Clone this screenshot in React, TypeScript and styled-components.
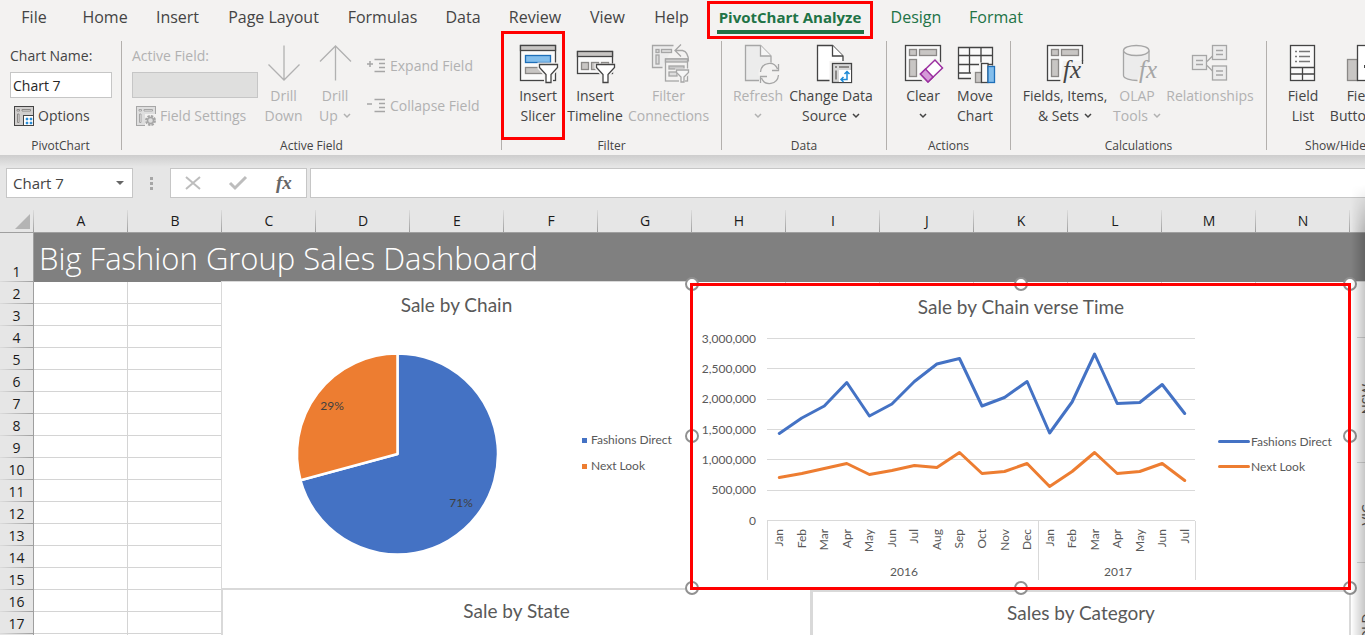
import React from "react";
import styled, { createGlobalStyle, css } from "styled-components";

const ui = `"Open Sans", "Noto Sans", sans-serif`;
const chartFont = `Lato, "Open Sans", sans-serif`;
const RED = "#ff0000";
const INK = "#444444";
const MUTED = "#b1b1b1";
const BLUE = "#4472c4";
const ORANGE = "#ed7d31";
const LINE = "#d9d9d9";

const GlobalStyle = createGlobalStyle`
  * { box-sizing: border-box; }
  body { margin: 0; overflow: hidden; font-family: ${ui}; color: ${INK}; }
  button, input { font: inherit; color: inherit; }
`;

const Window = styled.div`
  display: flex;
  flex-direction: column;
  height: 100vh;
  background: #e6e6e6;
`;

/* ---------- Ribbon ---------- */

const Ribbon = styled.header`
  flex: none;
  background: #f3f2f1;
`;

const TabBar = styled.nav`
  display: flex;
  height: 38px;
`;

const Tab = styled.button<{ $w: number; $tone?: "accent" | "active" }>`
  position: relative;
  flex: none;
  width: ${(p) => p.$w}px;
  padding: 0 0 4px;
  border: 0;
  background: none;
  font-size: 16px;
  line-height: 30px;
  white-space: nowrap;
  color: ${(p) => (p.$tone ? "#217346" : INK)};
  ${(p) =>
    p.$tone === "active" &&
    css`
      font-size: 15px;
      font-weight: 700;
      &::after {
        content: "";
        position: absolute;
        left: 14px;
        right: 13px;
        top: 30px;
        height: 4px;
        background: #217346;
      }
    `}
`;

const Callout = styled.span<{ $x: number; $y: number; $w: number; $h: number }>`
  position: absolute;
  left: ${(p) => p.$x}px;
  top: ${(p) => p.$y}px;
  width: ${(p) => p.$w}px;
  height: ${(p) => p.$h}px;
  border: 3px solid ${RED};
  pointer-events: none;
  z-index: 5;
`;

const Groups = styled.div`
  display: flex;
  height: 117px;
  padding-top: 3px;
`;

const Group = styled.section<{ $w: number }>`
  position: relative;
  flex: none;
  display: flex;
  flex-direction: column;
  justify-content: space-between;
  width: ${(p) => p.$w}px;
  height: 109px;
  border-right: 1px solid #b3b0ad;
`;

const GroupBody = styled.div`
  display: flex;
  padding-left: 10px;
`;

const GroupLabel = styled.div`
  height: 14px;
  margin-bottom: -3px;
  text-align: center;
  font-size: 12px;
  line-height: 14px;
`;

const BigButton = styled.button<{ $w: number }>`
  flex: none;
  width: ${(p) => p.$w}px;
  display: flex;
  flex-direction: column;
  align-items: center;
  padding: 3px 0 0;
  border: 0;
  background: none;
  font-size: 14px;
  line-height: 20px;
  white-space: nowrap;
  &:disabled { color: ${MUTED}; }
  > svg { margin-bottom: 2px; overflow: visible; }
`;

const TextLine = styled.span`
  display: flex;
  align-items: center;
  gap: 5px;
  height: 20px;
`;

const FieldStack = styled.div<{ $w: number }>`
  flex: none;
  display: flex;
  flex-direction: column;
  width: ${(p) => p.$w}px;
  padding-top: 4px;
  font-size: 14px;
`;

const FieldLabel = styled.label<{ $muted?: boolean }>`
  line-height: 22px;
  color: ${(p) => (p.$muted ? MUTED : INK)};
`;

const FieldInput = styled.input`
  width: 100%;
  height: 26px;
  margin-top: 5px;
  padding: 0 2px;
  border: 1px solid #c6c6c6;
  background: #fff;
  color: #262626;
  &:disabled { background: #dfdfde; }
`;

const SmallButton = styled.button`
  display: flex;
  align-items: center;
  gap: 4px;
  height: 20px;
  padding: 0 0 0 4px;
  border: 0;
  background: none;
  font-size: 14px;
  line-height: 20px;
  white-space: nowrap;
  &:disabled { color: ${MUTED}; }
  > svg { flex: none; }
`;

const OutlineStack = styled.div`
  display: flex;
  flex-direction: column;
  gap: 20px;
  padding: 15px 0 0 2px;
`;

const SettingsSlot = styled.div`
  margin-top: 8px;
`;

/* ---------- Formula bar ---------- */

const FormulaBar = styled.div`
  flex: none;
  display: flex;
  height: 55px;
  padding: 13px 0 12px 6px;
  background: linear-gradient(#cdcdcd, #e6e6e6 12px);
`;

const NameBox = styled.div`
  display: flex;
  flex: none;
  width: 127px;
  border: 1px solid #c6c6c6;
  background: #fff;
`;

const NameInput = styled.input`
  flex: 1;
  min-width: 0;
  padding: 0 6px;
  border: 0;
  background: none;
  font-size: 15px;
`;

const IconButton = styled.button<{ $w: number }>`
  display: flex;
  align-items: center;
  justify-content: center;
  width: ${(p) => p.$w}px;
  padding: 0;
  border: 0;
  background: none;
  > svg { overflow: visible; }
`;

const Grip = styled.div`
  display: flex;
  flex-direction: column;
  align-items: center;
  justify-content: center;
  gap: 2px;
  width: 37px;
  i { width: 3px; height: 3px; background: #a6a6a6; }
`;

const EntryTools = styled.div`
  display: flex;
  flex: none;
  width: 137px;
  margin-right: 3px;
  border: 1px solid #c6c6c6;
  background: #fff;
`;

const FormulaInput = styled.input`
  flex: 1;
  min-width: 0;
  border: 1px solid #c6c6c6;
  border-right: 0;
  background: #fff;
`;

/* ---------- Worksheet ---------- */

const Sheet = styled.main`
  position: relative;
  flex: 1;
  min-height: 0;
  overflow: hidden;
  background: #fff;
`;

const Cells = styled.table`
  table-layout: fixed;
  width: 1538px;
  border-collapse: separate;
  border-spacing: 0;
  font-size: 14px;
  color: #1a1a1a;
  th, td { padding: 0; white-space: nowrap; font-weight: 400; }
  thead th {
    height: 23px;
    line-height: 22px;
    border-bottom: 1px solid #9f9f9f;
    background: linear-gradient(#dcdcdc, #9f9f9f) right / 1px 100% no-repeat #e6e6e6;
  }
  tbody th {
    height: 22px;
    line-height: 21px;
    border-right: 1px solid #9f9f9f;
    background: linear-gradient(90deg, #dcdcdc, #9f9f9f) bottom / 100% 1px no-repeat #e6e6e6;
  }
  tbody td {
    border-right: 1px solid #d4d4d4;
    border-bottom: 1px solid #d4d4d4;
  }
`;

const BannerRow = styled.tr`
  && th { height: 49px; vertical-align: bottom; }
  && td {
    border: 0;
    padding-left: 5px;
    background: #808080;
    color: #fff;
    font-size: 31px;
    font-weight: 300;
    line-height: 48px;
  }
`;

const Floating = styled.section<{ $x: number; $y: number; $w: number; $h: number; $edge?: number }>`
  position: absolute;
  left: ${(p) => p.$x}px;
  top: ${(p) => p.$y}px;
  width: ${(p) => p.$w}px;
  height: ${(p) => p.$h}px;
  border: ${(p) => p.$edge ?? 1}px solid ${LINE};
  background: #fff;
  font-family: ${chartFont};
  color: #595959;
`;

const ChartTitle = styled.h2<{ $tight?: boolean }>`
  margin: ${(p) => (p.$tight ? 9 : 11)}px 0 1px;
  text-align: center;
  font-size: 19px;
  font-weight: 400;
  line-height: 24px;
`;

const ChartBody = styled.div`
  display: flex;
  svg { flex: none; display: block; font-family: ${chartFont}; font-size: 12px; fill: #595959; }
`;

const Legend = styled.ul<{ $row: number }>`
  margin: 0;
  padding: 109px 0 0;
  list-style: none;
  font-size: 12px;
  line-height: ${(p) => p.$row}px;
  white-space: nowrap;
  li { display: flex; align-items: center; }
`;

const Swatch = styled.i<{ $c: string; $line?: boolean }>`
  flex: none;
  width: ${(p) => (p.$line ? 32 : 5)}px;
  height: ${(p) => (p.$line ? 3 : 5)}px;
  margin-right: ${(p) => (p.$line ? 1 : 4)}px;
  border-radius: ${(p) => (p.$line ? 2 : 0)}px;
  background: ${(p) => p.$c};
`;

const Handle = styled.i<{ $x: number; $y: number }>`
  position: absolute;
  left: ${(p) => p.$x}px;
  top: ${(p) => p.$y}px;
  width: 14px;
  height: 14px;
  margin: -7px 0 0 -7px;
  border: 2px solid #919191;
  border-radius: 50%;
  background: #fff;
`;

const EdgeShadow = styled.div`
  position: fixed;
  right: 0;
  top: 185px;
  bottom: 0;
  width: 14px;
  background: linear-gradient(90deg, transparent, rgba(0, 0, 0, 0.22));
  mask-image: linear-gradient(transparent, #000 50px);
  pointer-events: none;
`;

/* ---------- Icons ---------- */

const Chevron = () => (
  <svg width="8" height="6" viewBox="0 0 8 6" fill="none" stroke="currentColor" strokeWidth="1.5" aria-hidden>
    <path d="M1 1l3 3 3-3" />
  </svg>
);

const Big = ({ children, tone = INK }: { children: React.ReactNode; tone?: string }) => (
  <svg width="40" height="40" viewBox="0 0 40 40" fill="none" stroke={tone} strokeWidth="1.3" aria-hidden>
    {children}
  </svg>
);

const Fx = ({ x, y, size, color }: { x: number; y: number; size: number; color: string }) => (
  <text x={x} y={y} fill={color} stroke="none" fontFamily="Liberation Serif, serif" fontStyle="italic" fontSize={size}>
    fx
  </text>
);

const Funnel = () => <path d="M21.5 20.5h18v3l-6.500 7v8h-5v-8l-6.500-7z" fill="#fff" />;

const SlicerIcon = () => (
  <Big>
    <rect x="2.500" y="1.500" width="35" height="35" fill="#fafafa" />
    <rect x="2.500" y="1.500" width="35" height="5" fill="#c8c6c4" />
    <rect x="7.500" y="11.500" width="25" height="7" fill="#83beec" stroke="#1e6fb8" />
    <rect x="7.500" y="23.500" width="17" height="6" fill="#c8c6c4" stroke="#8a8886" />
    <path d="M19.500 18.500h22v6l-6.500 7v9h-9v-9l-6.500-7z" fill="#f3f2f1" stroke="none" />
    <Funnel />
  </Big>
);

const TimelineIcon = () => (
  <Big>
    <rect x="2.500" y="7.500" width="35" height="22" fill="#fafafa" />
    <rect x="2.500" y="7.500" width="35" height="5" fill="#c8c6c4" />
    <g fill="#c8c6c4" stroke="#8a8886">
      <rect x="6.500" y="18.500" width="7" height="7" />
      <rect x="16.500" y="18.500" width="7" height="7" />
      <rect x="26.500" y="18.500" width="7" height="7" />
    </g>
    <path d="M19.500 19.500h22v5l-6.500 7v9h-9v-9l-6.500-7z" fill="#f3f2f1" stroke="none" />
    <Funnel />
  </Big>
);

const ConnectionsIcon = () => (
  <Big tone="#a6a6a6">
    <path d="M24.500 1.500h-21v22h10" fill="#ececec" />
    <rect x="7" y="5.500" width="3" height="3" fill="#ddd" />
    <rect x="12.500" y="5.500" width="10" height="3" fill="#ddd" />
    <rect x="7" y="11" width="3" height="9" fill="#ddd" />
    <path d="M32 .5l-6 6 6 6M26.500 6.500h7c4.500 1 6 5 6 11" />
    <rect x="16.500" y="15" width="22" height="22" fill="#f3f2f1" />
    <rect x="16.500" y="15" width="22" height="3" fill="#d0d0d0" />
    <rect x="20" y="22" width="15" height="3" fill="#c8c8c8" />
    <rect x="20" y="28" width="8" height="4" fill="#ddd" />
    <path d="M26 24.500h15v5l-5 5v5h-6v-6z" fill="#f3f2f1" stroke="none" />
    <path d="M27.500 26h12v2.500l-4.500 4.500v5h-3v-5l-4.500-4.500z" fill="#f6f6f6" />
  </Big>
);

const RefreshIcon = () => (
  <Big tone="#a6a6a6">
    <path d="M21 36.500H7.500v-35h15l10.500 10.500v7" fill="#ececec" />
    <path d="M22.500 1.500V12H33" fill="#f6f6f6" />
    <circle cx="31.500" cy="29.500" r="11" fill="#f3f2f1" stroke="none" />
    <path d="M22.500 28c1-10 13.500-11.500 17-3M40.500 20v6.500H34M40.500 31c-1 10-13.500 11.500-17 3M22.500 39v-6.500H29" />
  </Big>
);

const ChangeSourceIcon = () => (
  <Big>
    <path d="M21 36.500H6.500v-35h15l10.500 10.500v7" fill="#fff" />
    <path d="M21.500 1.500V12H32" fill="#fff" />
    <rect x="18.500" y="17" width="24" height="23" fill="#f3f2f1" stroke="none" />
    <rect x="21.500" y="19.500" width="19" height="19" fill="#d8d8d8" />
    <path d="M28 26h12v12H28z" fill="#fff" stroke="none" />
    <path d="M24 23h2M28 23h10M25 26.500v9" stroke="#8a8886" strokeWidth="2" />
    <path d="M30 35.500h6v-8M33.500 30l2.500-2.500 2.500 2.500M32.500 33l-2.500 2.500 2.500 2.500" stroke="#1e8ad6" strokeWidth="1.500" />
  </Big>
);

const PivotFrame = () => (
  <>
    <rect x="2.500" y="1.500" width="35" height="35" fill="#fafafa" />
    <g fill="#c8c6c4" stroke="#8a8886">
      <rect x="6.500" y="5.500" width="7" height="6" />
      <rect x="16.500" y="5.500" width="17" height="6" />
      <rect x="6.500" y="15.500" width="7" height="17" />
    </g>
  </>
);

const ClearIcon = () => (
  <Big>
    <PivotFrame />
    <path d="M15 31L32 13l10 9v16H20z" fill="#f3f2f1" stroke="none" />
    <path d="M17.500 30L32 16l7.500 8L25 38z" fill="#fff" stroke="#9b2fa0" strokeWidth="1.500" />
    <path d="M17.500 30l5-5 7.500 8-5 5z" fill="#d59ad8" stroke="#9b2fa0" strokeWidth="1.500" />
  </Big>
);

const MoveChartIcon = () => (
  <Big>
    <path d="M3.500 3.500h34v26h-17l-4 5h-13z" fill="#fafafa" />
    <path d="M3.500 11.500h34M3.500 20.500h34M3.500 29h15M14.500 3.500v26M26 3.500v26" />
    <path d="M16 27.500h8v-9h8v3h9v19H16z" fill="#f3f2f1" stroke="none" />
    <rect x="20.500" y="28.500" width="6" height="10" fill="#c8c6c4" stroke="#8a8886" />
    <rect x="26.500" y="19.500" width="6.500" height="19" fill="#fafafa" />
    <rect x="33" y="22.500" width="6.500" height="16" fill="#83beec" stroke="#1e6fb8" />
  </Big>
);

const FieldsIcon = () => (
  <Big>
    <PivotFrame />
    <path d="M18 17h22v22H15z" fill="#f3f2f1" stroke="none" />
    <path d="M37.500 16v4" />
    <Fx x={18} y={34} size={25} color={INK} />
  </Big>
);

const OlapIcon = () => (
  <Big tone="#a6a6a6">
    <path d="M7 7v25c3 3 8 4 13 4l11-18V7z" fill="#ececec" stroke="none" />
    <path d="M6.500 6.500v25c0 3 7 5 14 5M32 6.500V18" />
    <ellipse cx="19.250" cy="6.500" rx="12.750" ry="5" fill="#f3f2f1" />
    <Fx x={22} y={34} size={25} color="#a6a6a6" />
  </Big>
);

const RelationshipsIcon = () => (
  <Big tone="#a6a6a6">
    <path d="M17 17.500l6-6M17 21.500l6 6" />
    <g fill="#ececec">
      <rect x="2.500" y="11.500" width="14" height="14" />
      <rect x="22.500" y="1.500" width="14" height="14" />
      <rect x="22.500" y="22" width="14" height="14" />
    </g>
    <path d="M6 16.500h7M6 20.500h7M26 6.500h7M26 10.500h7M26 27h7M26 31h7" />
  </Big>
);

const FieldListIcon = () => (
  <Big>
    <rect x="7.500" y="1.500" width="24" height="35" fill="#fafafa" />
    <path d="M7.500 23.500h24M7.500 30h24M19.500 23.500v13" />
    <path d="M12 7.500h2M16 7.500h11M12 12.500h2M16 12.500h11M12 17.500h2M16 17.500h11" stroke="#777" />
  </Big>
);

const FieldButtonsIcon = () => (
  <Big>
    <rect x="5.500" y="15.500" width="10" height="21" fill="#c8c6c4" stroke="#8a8886" />
    <rect x="15.500" y="1.500" width="16" height="35" fill="#fff" />
    <path d="M22 22.500h6" strokeWidth="3" />
  </Big>
);

const DrillIcon = ({ up }: { up?: boolean }) => (
  <Big tone="#b1b1b1">
    {up ? <path d="M20.500 36.500V2M5 17.500L20.500 2 36 17.500" /> : <path d="M20 1.500V36M4.500 20.500L20 36l15.500-15.500" />}
  </Big>
);

const PaneIcon = ({ gear }: { gear?: boolean }) => {
  const c = gear ? "#a6a6a6" : INK;
  return (
    <svg width="20" height="20" viewBox="0 0 20 20" fill="none" stroke={c} aria-hidden>
      <rect x=".5" y=".5" width="19" height="19" fill={gear ? "#dedede" : "#d0cecd"} />
      <path d="M3 3.500h2.500v1.500H3zM8 3.500h8.500v1.500H8zM3.500 8h1.500v8.500H3.500z" fill="#f3f2f1" stroke={gear ? "#a6a6a6" : "#8a8886"} />
      {gear ? (
        <>
          <path d="M9 8h11.500v12.500H9z" fill="#f3f2f1" stroke="none" />
          <circle cx="14.500" cy="14.500" r="4.500" strokeWidth="2" strokeDasharray="2.400 1.100" />
          <circle cx="14.500" cy="14.500" r="3" fill="#dedede" strokeWidth="1.500" />
        </>
      ) : (
        <>
          <rect x="9.500" y="9.500" width="10" height="10" fill="#fff" />
          <path d="M12 12h2v2h-2zM16 12h2v2h-2zM12 16h2v2h-2zM16 16h2v2h-2z" fill="#2b8fd8" stroke="#2b8fd8" strokeWidth=".5" />
        </>
      )}
    </svg>
  );
};

const OutlineIcon = ({ plus }: { plus?: boolean }) => (
  <svg width="19" height="16" viewBox="0 0 19 16" fill="none" stroke="#a6a6a6" strokeWidth="1.500" aria-hidden>
    <path d={plus ? "M0 6h6M3 3v6" : "M0 6h5"} />
    <path d="M7.500 1.500H18M12 5.500h6M12 9.500h6M7.500 13.500H18" />
  </svg>
);

/* ---------- Charts ---------- */

const months = ["Jan", "Feb", "Mar", "Apr", "May", "Jun", "Jul", "Aug", "Sep", "Oct", "Nov", "Dec"];
const fashions = [1434, 1690, 1887, 2275, 1722, 1920, 2291, 2580, 2670, 1887, 2027, 2291, 1442, 1953, 2744, 1928, 1945, 2242, 1764];
const nextLook = [709, 775, 857, 940, 758, 824, 907, 874, 1121, 775, 808, 940, 560, 808, 1121, 775, 808, 940, 659];
const ticks = [3000, 2500, 2000, 1500, 1000, 500, 0];

const LEFT = 75;
const RIGHT = 503;
const STEP = (RIGHT - LEFT) / fashions.length;
const yOf = (v: number) => 200.5 - (v * 182) / 3000;
const xOf = (i: number) => LEFT + 1 + STEP * (i + 0.5);
const pointsOf = (d: number[]) => d.map((v, i) => `${xOf(i).toFixed(1)},${yOf(v).toFixed(1)}`).join(" ");

const LinePlot = () => (
  <svg width="526" height="264" role="img" aria-label="Monthly sales by chain">
    {ticks.map((t) => (
      <g key={t}>
        <path d={`M${LEFT} ${Math.floor(yOf(t)) + 0.5}H${RIGHT}`} stroke={LINE} />
        <text x="64" y={yOf(t) + 4} textAnchor="end">
          {t ? (t * 1000).toLocaleString("en-US") : "0"}
        </text>
      </g>
    ))}
    <path d={`M${LEFT + 0.5} 201v59M${Math.ceil(LEFT + STEP * 12) + 0.5} 201v59M${RIGHT + 0.5} 201v59`} stroke={LINE} />
    {fashions.map((_, i) => (
      <text key={i} transform={`translate(${(xOf(i) + 4).toFixed(0)} 209) rotate(-90)`} textAnchor="end">
        {months[i % 12]}
      </text>
    ))}
    <text x="212" y="256" textAnchor="middle">2016</text>
    <text x="426" y="256" textAnchor="middle">2017</text>
    <g fill="none" strokeWidth="3" strokeLinecap="round" strokeLinejoin="round">
      <polyline points={pointsOf(fashions)} stroke={BLUE} />
      <polyline points={pointsOf(nextLook)} stroke={ORANGE} />
    </g>
  </svg>
);

const PiePlot = () => (
  <svg width="360" height="250" role="img" aria-label="Share of sales by chain">
    <g stroke="#fff" strokeWidth="2.500" strokeLinejoin="round">
      <path d="M175.500 136V35.500A100.500 100.500 0 1 1 78.500 162.300z" fill={BLUE} />
      <path d="M175.500 136L78.500 162.300A100.500 100.500 0 0 1 175.500 35.500z" fill={ORANGE} />
    </g>
    <g fill="#404040" textAnchor="middle">
      <text x="110" y="92">29%</text>
      <text x="239" y="189">71%</text>
    </g>
  </svg>
);

const ChainLegend = ({ line }: { line?: boolean }) => (
  <Legend $row={line ? 25 : 26}>
    <li><Swatch $c={BLUE} $line={line} />Fashions Direct</li>
    <li><Swatch $c={ORANGE} $line={line} />Next Look</li>
  </Legend>
);

/* ---------- Page ---------- */

const Worksheet = () => (
  <Sheet>
    <Cells>
      <colgroup>
        <col style={{ width: 34 }} />
        {Array.from({ length: 16 }, (_, i) => <col key={i} />)}
      </colgroup>
      <thead>
        <tr>
          <th aria-label="Select all">
            <svg width="34" height="22" viewBox="0 0 34 22" display="block" aria-hidden>
              <path d="M30 4v15H15z" fill="#b4b4b4" />
            </svg>
          </th>
          {"ABCDEFGHIJKLMNOP".split("").map((c) => <th key={c} scope="col">{c}</th>)}
        </tr>
      </thead>
      <tbody>
        <BannerRow>
          <th scope="row">1</th>
          <td colSpan={16}>Big Fashion Group Sales Dashboard</td>
        </BannerRow>
        {Array.from({ length: 24 }, (_, r) => (
          <tr key={r}>
            <th scope="row">{r + 2}</th>
            {Array.from({ length: 16 }, (_, c) => <td key={c} />)}
          </tr>
        ))}
      </tbody>
    </Cells>

    <Floating $x={1350} $y={71} $w={190} $h={800}>
      <svg width="60" height="600" fontSize="13" fill="#595959" aria-hidden>
        <path d="M6 55.500h9M6 180.500h9M6 280.500h9" stroke={LINE} />
        <text transform="translate(21 117) rotate(-90)" textAnchor="middle">NSW</text>
        <text transform="translate(21 233) rotate(-90)" textAnchor="middle">VIC</text>
        <text transform="translate(21 345) rotate(-90)" textAnchor="middle">QLD</text>
      </svg>
    </Floating>
    <Floating $x={221} $y={378} $w={591} $h={320} $edge={2}>
      <ChartTitle $tight>Sale by State</ChartTitle>
    </Floating>
    <Floating $x={811} $y={380} $w={540} $h={320} $edge={2}>
      <ChartTitle $tight>Sales by Category</ChartTitle>
    </Floating>
    <Floating $x={221} $y={71} $w={471} $h={308}>
      <ChartTitle>Sale by Chain</ChartTitle>
      <ChartBody>
        <PiePlot />
        <ChainLegend />
      </ChartBody>
    </Floating>
    <Floating $x={691} $y={73} $w={660} $h={307}>
      <ChartTitle>Sale by Chain verse Time</ChartTitle>
      <ChartBody>
        <LinePlot />
        <ChainLegend line />
      </ChartBody>
      {[0, 329, 658].flatMap((x) =>
        [0, 152, 304].filter((y) => !(x === 329 && y === 152)).map((y) => <Handle key={`${x}-${y}`} $x={x} $y={y} />)
      )}
    </Floating>
    <Callout $x={690} $y={73} $w={661} $h={307} />
  </Sheet>
);

export default function App() {
  return (
    <Window>
      <GlobalStyle />
      <Ribbon>
        <TabBar>
          <Tab $w={68}>File</Tab>
          <Tab $w={74}>Home</Tab>
          <Tab $w={71}>Insert</Tab>
          <Tab $w={121}>Page Layout</Tab>
          <Tab $w={97}>Formulas</Tab>
          <Tab $w={64}>Data</Tab>
          <Tab $w={80}>Review</Tab>
          <Tab $w={65}>View</Tab>
          <Tab $w={63}>Help</Tab>
          <Tab $w={174} $tone="active">
            PivotChart Analyze
            <Callout $x={4} $y={1} $w={166} $h={38} />
          </Tab>
          <Tab $w={78} $tone="accent">Design</Tab>
          <Tab $w={82} $tone="accent">Format</Tab>
        </TabBar>
        <Groups>
          <Group $w={122}>
            <GroupBody>
              <FieldStack $w={102}>
                <FieldLabel htmlFor="chart-name">Chart Name:</FieldLabel>
                <FieldInput id="chart-name" defaultValue="Chart 7" />
                <SettingsSlot>
                  <SmallButton><PaneIcon />Options</SmallButton>
                </SettingsSlot>
              </FieldStack>
            </GroupBody>
            <GroupLabel>PivotChart</GroupLabel>
          </Group>
          <Group $w={380}>
            <GroupBody>
              <FieldStack $w={126}>
                <FieldLabel htmlFor="active-field" $muted>Active Field:</FieldLabel>
                <FieldInput id="active-field" disabled />
                <SettingsSlot>
                  <SmallButton disabled><PaneIcon gear />Field Settings</SmallButton>
                </SettingsSlot>
              </FieldStack>
              <BigButton $w={51} disabled><DrillIcon /><TextLine>Drill</TextLine><TextLine>Down</TextLine></BigButton>
              <BigButton $w={52} disabled><DrillIcon up /><TextLine>Drill</TextLine><TextLine>Up <Chevron /></TextLine></BigButton>
              <OutlineStack>
                <SmallButton disabled><OutlineIcon plus />Expand Field</SmallButton>
                <SmallButton disabled><OutlineIcon />Collapse Field</SmallButton>
              </OutlineStack>
            </GroupBody>
            <GroupLabel>Active Field</GroupLabel>
          </Group>
          <Group $w={220}>
            <GroupBody>
              <BigButton $w={52}><SlicerIcon /><TextLine>Insert</TextLine><TextLine>Slicer</TextLine></BigButton>
              <BigButton $w={62}><TimelineIcon /><TextLine>Insert</TextLine><TextLine>Timeline</TextLine></BigButton>
              <BigButton $w={85} disabled><ConnectionsIcon /><TextLine>Filter</TextLine><TextLine>Connections</TextLine></BigButton>
            </GroupBody>
            <GroupLabel>Filter</GroupLabel>
            <Callout $x={-1} $y={-10} $w={64} $h={109} />
          </Group>
          <Group $w={165}>
            <GroupBody>
              <BigButton $w={52} disabled><RefreshIcon /><TextLine>Refresh</TextLine><TextLine><Chevron /></TextLine></BigButton>
              <BigButton $w={94}><ChangeSourceIcon /><TextLine>Change Data</TextLine><TextLine>Source <Chevron /></TextLine></BigButton>
            </GroupBody>
            <GroupLabel>Data</GroupLabel>
          </Group>
          <Group $w={124}>
            <GroupBody>
              <BigButton $w={52}><ClearIcon /><TextLine>Clear</TextLine><TextLine><Chevron /></TextLine></BigButton>
              <BigButton $w={52}><MoveChartIcon /><TextLine>Move</TextLine><TextLine>Chart</TextLine></BigButton>
            </GroupBody>
            <GroupLabel>Actions</GroupLabel>
          </Group>
          <Group $w={256}>
            <GroupBody>
              <BigButton $w={88}><FieldsIcon /><TextLine>Fields, Items,</TextLine><TextLine>&amp; Sets <Chevron /></TextLine></BigButton>
              <BigButton $w={56} disabled><OlapIcon /><TextLine>OLAP</TextLine><TextLine>Tools <Chevron /></TextLine></BigButton>
              <BigButton $w={90} disabled><RelationshipsIcon /><TextLine>Relationships</TextLine></BigButton>
            </GroupBody>
            <GroupLabel>Calculations</GroupLabel>
          </Group>
          <Group $w={138}>
            <GroupBody>
              <BigButton $w={52}><FieldListIcon /><TextLine>Field</TextLine><TextLine>List</TextLine></BigButton>
              <BigButton $w={66}><FieldButtonsIcon /><TextLine>Field</TextLine><TextLine>Buttons <Chevron /></TextLine></BigButton>
            </GroupBody>
            <GroupLabel>Show/Hide</GroupLabel>
          </Group>
        </Groups>
      </Ribbon>

      <FormulaBar>
        <NameBox>
          <NameInput aria-label="Name box" defaultValue="Chart 7" />
          <IconButton $w={24} aria-label="Show names">
            <svg width="8" height="4" viewBox="0 0 8 4" aria-hidden><path d="M0 0h8L4 4z" fill="#666" /></svg>
          </IconButton>
        </NameBox>
        <Grip><i /><i /><i /></Grip>
        <EntryTools>
          <IconButton $w={43} aria-label="Cancel">
            <svg width="16" height="14" viewBox="0 0 16 14" fill="none" stroke="#bdbdbd" strokeWidth="2" aria-hidden>
              <path d="M1 1l14 12M15 1L1 13" />
            </svg>
          </IconButton>
          <IconButton $w={47} aria-label="Enter">
            <svg width="18" height="14" viewBox="0 0 18 14" fill="none" stroke="#bdbdbd" strokeWidth="3" aria-hidden>
              <path d="M1 7l5 5L17 1" />
            </svg>
          </IconButton>
          <IconButton $w={43} aria-label="Insert function">
            <svg width="18" height="24" viewBox="0 0 18 24" aria-hidden>
              <text x="2" y="18" fontFamily="Liberation Serif, serif" fontStyle="italic" fontWeight="700" fontSize="19" fill="#666">fx</text>
            </svg>
          </IconButton>
        </EntryTools>
        <FormulaInput aria-label="Formula" />
      </FormulaBar>

      <Worksheet />
      <EdgeShadow />
    </Window>
  );
}
